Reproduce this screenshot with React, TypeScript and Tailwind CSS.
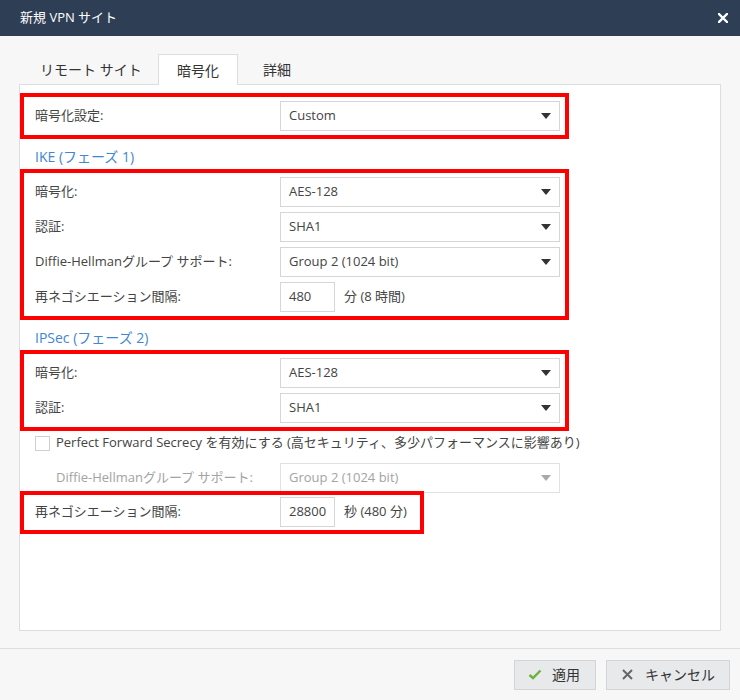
import React from "react";

const font = { fontFamily: '"Open Sans", "Noto Sans CJK JP", sans-serif' };

function Arrow({ disabled }: { disabled?: boolean }) {
  return (
    <svg width="10" height="6" viewBox="0 0 10 6" className="shrink-0">
      <path d="M0 0 L10 0 L5 6 Z" fill={disabled ? "#a9a9a9" : "#333333"} />
    </svg>
  );
}

function Select({ value, disabled }: { value: string; disabled?: boolean }) {
  return (
    <div
      className={
        "w-[280px] h-[30px] border flex items-center justify-between pl-[8px] pr-[8px] text-[13px] " +
        (disabled ? "border-[#e2e2e2] bg-white text-[#a3a3a3]" : "border-[#d6d6d6] bg-white text-[#444444]")
      }
    >
      <span>{value}</span>
      <Arrow disabled={disabled} />
    </div>
  );
}

function Row({ label, children, labelClass }: { label: string; children: React.ReactNode; labelClass?: string }) {
  return (
    <div className="flex items-center h-[30px]">
      <div className={"w-[245px] shrink-0 text-[13px] " + (labelClass ?? "text-[#444444]")}>{label}</div>
      {children}
    </div>
  );
}

function NumInput({ value, unit }: { value: string; unit: string }) {
  return (
    <div className="flex items-center">
      <div className="w-[55px] h-[30px] border border-[#d6d6d6] bg-white flex items-center pl-[8px] text-[13px] text-[#444444]">
        {value}
      </div>
      <span className="ml-[9px] text-[13px] text-[#444444]">{unit}</span>
    </div>
  );
}

export default function App() {
  return (
    <div className="w-[740px] h-[700px] bg-[#f7f7f7] flex flex-col" style={font}>
      <div className="h-[36px] bg-[#2e3e55] flex items-center justify-between pl-[20px] pr-[12px] text-white text-[13px] shrink-0">
        <span>新規 VPN サイト</span>
        <svg width="10" height="10" viewBox="0 0 10 10">
          <path d="M1 1 L9 9 M9 1 L1 9" stroke="#ffffff" strokeWidth="2.4" strokeLinecap="square" />
        </svg>
      </div>

      <div className="flex-1 flex flex-col px-[19px] pt-[18px] pb-[17px]">
        <div className="flex h-[30px] text-[14px] text-[#333333] relative z-10">
          <div className="w-[139px] flex items-center pl-[21px]">リモート サイト</div>
          <div className="w-[80px] h-[31px] flex items-center justify-center bg-white border border-b-0 border-[#dcdde2]">
            暗号化
          </div>
          <div className="w-[80px] flex items-center pl-[25px]">詳細</div>
        </div>

        <div className="flex-1 bg-white border border-[#dcdde2] pt-[8px]">
          <div className="w-[549px] border-4 border-[#ff0000] px-[11px] py-[4px] pr-[5px]">
            <Row label="暗号化設定:">
              <Select value="Custom" />
            </Row>
          </div>

          <div className="pl-[15px] pt-[8px] pb-[2px] leading-[20px] text-[14px] text-[#3f86d3]">IKE (フェーズ 1)</div>

          <div className="w-[549px] border-4 border-[#ff0000] px-[11px] py-[4px] pr-[5px] flex flex-col gap-[5px]">
            <Row label="暗号化:">
              <Select value="AES-128" />
            </Row>
            <Row label="認証:">
              <Select value="SHA1" />
            </Row>
            <Row label="Diffie-Hellmanグループ サポート:">
              <Select value="Group 2 (1024 bit)" />
            </Row>
            <Row label="再ネゴシエーション間隔:">
              <NumInput value="480" unit="分 (8 時間)" />
            </Row>
          </div>

          <div className="pl-[15px] pt-[8px] pb-[2px] leading-[20px] text-[14px] text-[#3f86d3]">IPSec (フェーズ 2)</div>

          <div className="w-[549px] border-4 border-[#ff0000] px-[11px] py-[4px] pr-[5px] flex flex-col gap-[5px]">
            <Row label="暗号化:">
              <Select value="AES-128" />
            </Row>
            <Row label="認証:">
              <Select value="SHA1" />
            </Row>
          </div>

          <div className="h-[24px] flex items-center pl-[15px]">
            <div className="w-[15px] h-[15px] border border-[#cfcfcf] bg-white shrink-0" />
            <span className="ml-[6px] text-[13px] text-[#444444]">
              Perfect Forward Secrecy を有効にする (高セキュリティ、多少パフォーマンスに影響あり)
            </span>
          </div>

          <div className="mt-[8px] pl-[36px] flex items-center h-[30px]">
            <div className="w-[224px] shrink-0 text-[13px] text-[#a3a3a3]">Diffie-Hellmanグループ サポート:</div>
            <Select value="Group 2 (1024 bit)" disabled />
          </div>

          <div className="relative -mt-[2px] w-[404px] border-4 border-[#ff0000] pl-[11px] pt-[2px] pb-[3px]">
            <Row label="再ネゴシエーション間隔:">
              <NumInput value="28800" unit="秒 (480 分)" />
            </Row>
          </div>
        </div>
      </div>

      <div className="h-[52px] border-t border-[#dedede] flex items-center justify-end pr-[10px] gap-[10px] shrink-0">
        <div className="w-[82px] h-[30px] bg-[#e8e9eb] border border-[#d3d4d7] flex items-center pl-[13px] gap-[10px] text-[14px] text-[#333333]">
          <svg width="14" height="11" viewBox="0 0 14 11">
            <path d="M1.5 6 L5 9 L12.5 1.5" stroke="#6bb43c" strokeWidth="2.4" fill="none" />
          </svg>
          <span>適用</span>
        </div>
        <div className="w-[124px] h-[30px] bg-[#e8e9eb] border border-[#d3d4d7] flex items-center pl-[15px] gap-[12px] text-[14px] text-[#333333]">
          <svg width="11" height="11" viewBox="0 0 11 11">
            <path d="M1 1 L10 10 M10 1 L1 10" stroke="#666666" strokeWidth="2" />
          </svg>
          <span>キャンセル</span>
        </div>
      </div>
    </div>
  );
}
